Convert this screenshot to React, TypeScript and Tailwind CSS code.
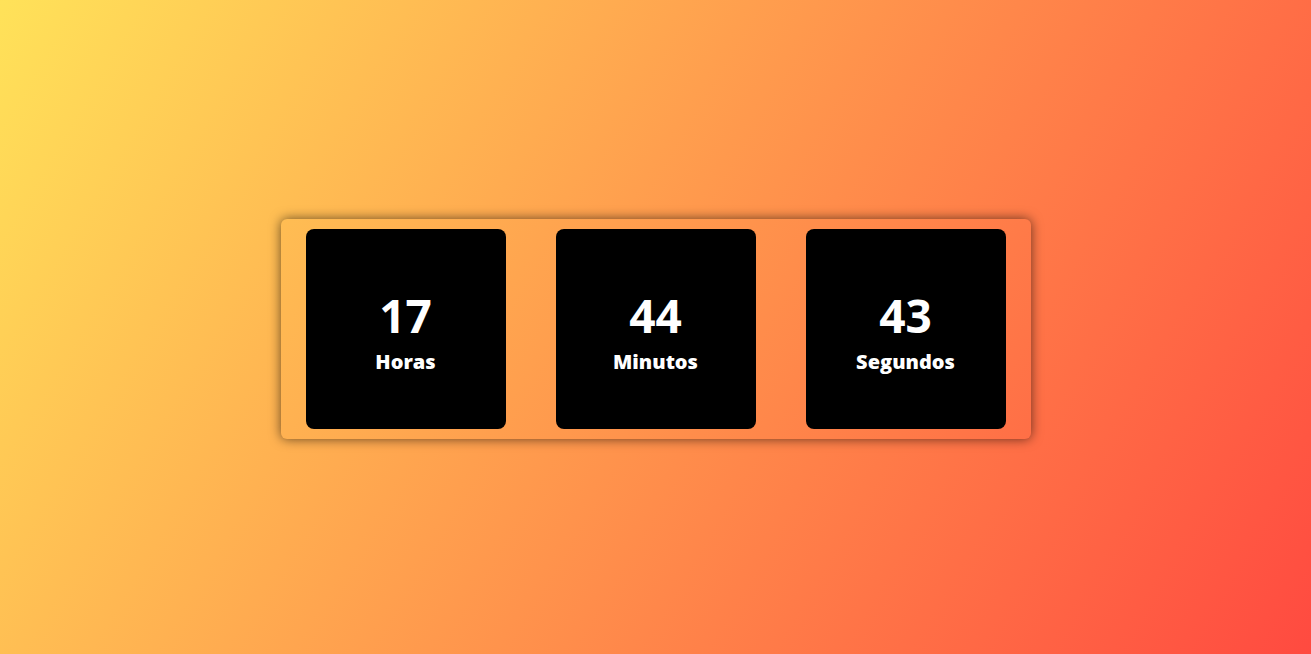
const units = [
  { value: "17", label: "Horas" },
  { value: "44", label: "Minutos" },
  { value: "43", label: "Segundos" },
];

export default function App() {
  return (
    <div
      className="flex h-[654px] w-full items-center justify-center bg-[linear-gradient(121deg,#ffe259,#ff4a40)]"
      style={{ fontFamily: '"Open Sans", "Noto Sans", sans-serif' }}
    >
      <div className="mt-1 flex gap-[50px] rounded-md px-[25px] py-[10px] shadow-[0_0_12px_rgba(0,0,0,0.6)]">
        {units.map((u) => (
          <div
            key={u.label}
            className="flex h-[200px] w-[200px] flex-col items-center justify-center rounded-lg bg-black text-white"
          >
            <span className="text-[46px] font-bold leading-normal">{u.value}</span>
            <span className="-mt-[3px] text-[20px] font-extrabold leading-normal">{u.label}</span>
          </div>
        ))}
      </div>
    </div>
  );
}
